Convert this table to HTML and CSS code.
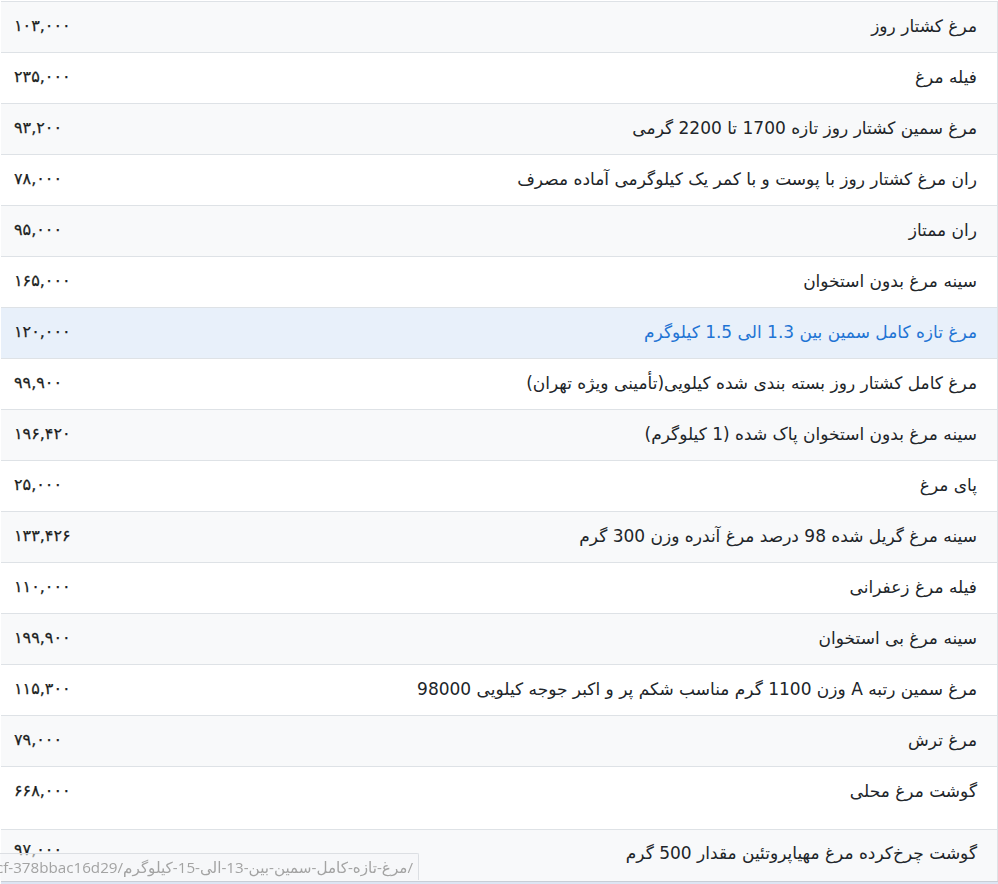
FILE: index.html
```html
<!DOCTYPE html>
<html lang="fa" dir="rtl">
<head>
<meta charset="utf-8">
<title>قیمت مرغ</title>
<link rel="stylesheet" href="styles.css">
</head>
<body>
<main class="page">
  <table class="price-table">
    <tbody>
      <tr><td class="name"><a href="#">مرغ کشتار روز</a></td><td class="price">۱۰۳,۰۰۰</td></tr>
      <tr><td class="name"><a href="#">فیله مرغ</a></td><td class="price">۲۳۵,۰۰۰</td></tr>
      <tr><td class="name"><a href="#">مرغ سمین کشتار روز تازه 1700 تا 2200 گرمی</a></td><td class="price">۹۳,۲۰۰</td></tr>
      <tr><td class="name"><a href="#">ران مرغ کشتار روز با پوست و با کمر یک کیلوگرمی آماده مصرف</a></td><td class="price">۷۸,۰۰۰</td></tr>
      <tr><td class="name"><a href="#">ران ممتاز</a></td><td class="price">۹۵,۰۰۰</td></tr>
      <tr><td class="name"><a href="#">سینه مرغ بدون استخوان</a></td><td class="price">۱۶۵,۰۰۰</td></tr>
      <tr class="hover"><td class="name"><a href="#">مرغ تازه کامل سمین بین 1.3 الی 1.5 کیلوگرم</a></td><td class="price">۱۲۰,۰۰۰</td></tr>
      <tr><td class="name"><a href="#">مرغ کامل کشتار روز بسته بندی شده کیلویی(تأمینی ویژه تهران)</a></td><td class="price">۹۹,۹۰۰</td></tr>
      <tr><td class="name"><a href="#">سینه مرغ بدون استخوان پاک شده (1 کیلوگرم)</a></td><td class="price">۱۹۶,۴۲۰</td></tr>
      <tr><td class="name"><a href="#">پای مرغ</a></td><td class="price">۲۵,۰۰۰</td></tr>
      <tr><td class="name"><a href="#">سینه مرغ گریل شده 98 درصد مرغ آندره وزن 300 گرم</a></td><td class="price">۱۳۳,۴۲۶</td></tr>
      <tr><td class="name"><a href="#">فیله مرغ زعفرانی</a></td><td class="price">۱۱۰,۰۰۰</td></tr>
      <tr><td class="name"><a href="#">سینه مرغ بی استخوان</a></td><td class="price">۱۹۹,۹۰۰</td></tr>
      <tr><td class="name"><a href="#">مرغ سمین رتبه A وزن 1100 گرم مناسب شکم پر و اکبر جوجه کیلویی 98000</a></td><td class="price">۱۱۵,۳۰۰</td></tr>
      <tr><td class="name"><a href="#">مرغ ترش</a></td><td class="price">۷۹,۰۰۰</td></tr>
      <tr class="tall"><td class="name"><a href="#">گوشت مرغ محلی</a></td><td class="price">۶۶۸,۰۰۰</td></tr>
      <tr class="last"><td class="name"><a href="#">گوشت چرخ‌کرده مرغ مهیاپروتئین مقدار 500 گرم</a></td><td class="price">۹۷,۰۰۰</td></tr>
    </tbody>
  </table>
  <div class="below"></div>
</main>
<div class="status-bar"><span class="status-url">https://example.ir/product/5d1e2a3b-4c5d-9ecf-378bbac16d29/مرغ-تازه-کامل-سمین-بین-13-الی-15-کیلوگرم/</span></div>
</body>
</html>
```
FILE: styles.css
```css
html, body {
  margin: 0;
  padding: 0;
  background: #ffffff;
}

body {
  font-family: "DejaVu Sans", sans-serif;
  color: #212529;
  font-size: 17px;
}

.page {
  width: 997px;
  padding-top: 1px;
}

.price-table {
  width: 997px;
  border-collapse: collapse;
  border-right: 1px solid #dee2e6;
}

.price-table tr {
  border-top: 1px solid #dee2e6;
}

.price-table tr:nth-child(odd) {
  background: #f8f9fa;
}

.price-table tr.hover {
  background: #e8f0fa;
}

.price-table td {
  height: 51px;
  padding: 0 0 3px 0;
  vertical-align: middle;
  box-sizing: border-box;
}

.name {
  text-align: right;
  padding-right: 20px !important;
}

.name a {
  color: #212529;
  text-decoration: none;
}

.hover .name a {
  color: #1f74d4;
}

.price {
  text-align: left;
  padding-left: 13px !important;
  width: 200px;
  white-space: nowrap;
  font-size: 16px;
  color: #1a1d20;
  -webkit-text-stroke: 0.25px #1a1d20;
}

.tall td {
  height: 63px;
  padding-bottom: 15px !important;
}

.last td {
  padding-bottom: 5px !important;
}

.last td.price {
  padding-bottom: 11px !important;
}

.below {
  border-top: 1px solid #c9ced6;
  height: 40px;
  background: #dde5f3;
}

.status-bar {
  position: fixed;
  left: 0;
  bottom: 4px;
  width: 419px;
  height: 27px;
  box-sizing: border-box;
  background: rgba(244, 245, 248, 0.55);
  border-top: 1px solid #dcdfe3;
  border-right: 1px solid #dcdfe3;
  border-top-right-radius: 2px;
  display: flex;
  justify-content: flex-end;
  align-items: center;
  overflow: hidden;
  direction: ltr;
  padding-right: 5px;
}

.status-url {
  flex: none;
  white-space: nowrap;
  font-size: 15.2px;
  color: #a3a3a3;
  font-family: "Open Sans", "DejaVu Sans", sans-serif;
}
```
